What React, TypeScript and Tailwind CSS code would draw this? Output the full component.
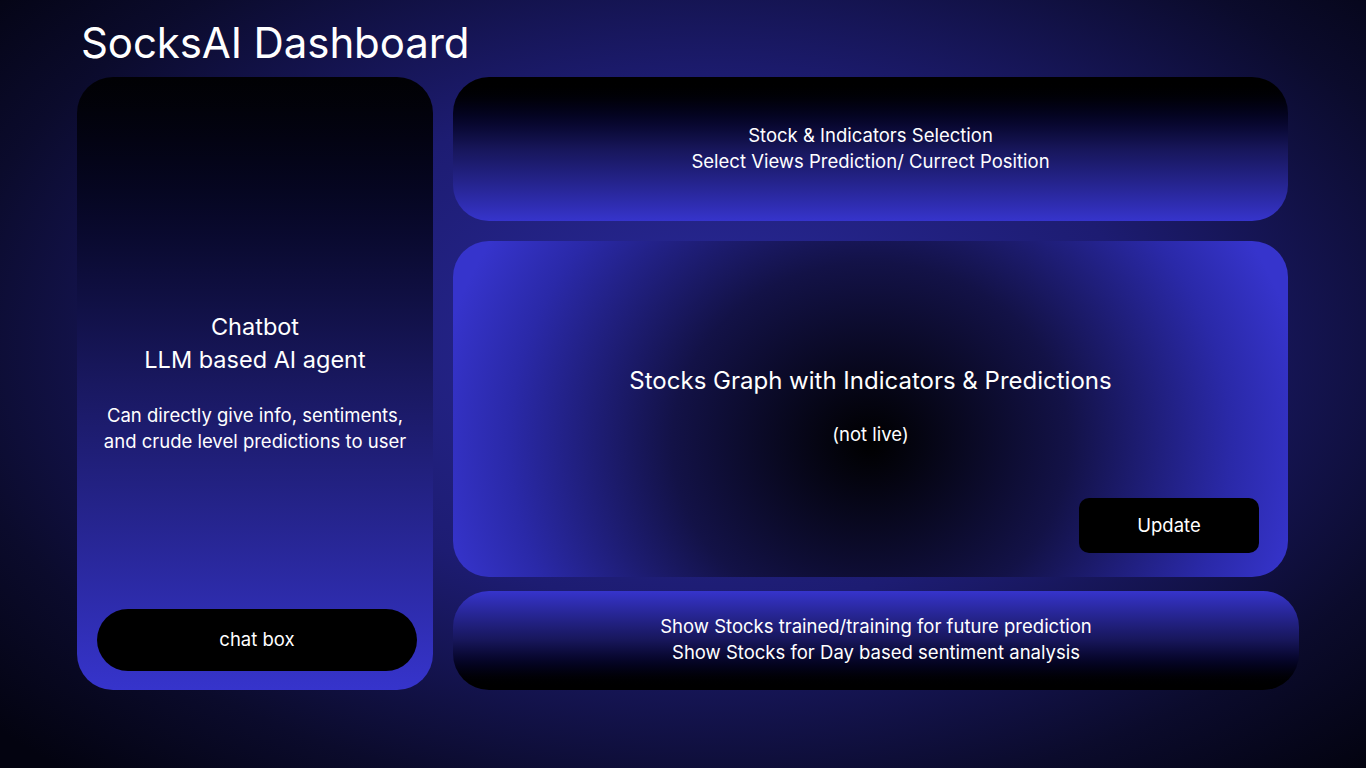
import React from 'react';

const font = { fontFamily: 'Inter, "Noto Sans", sans-serif' };

export default function App() {
    return (
        <div
            style={font}
            className="h-[768px] w-full overflow-hidden text-white bg-[radial-gradient(ellipse_70%_75%_at_52%_45%,#2a2a9c_0%,#1d1c72_45%,#0b0b2c_80%,#030310_100%)]"
        >
            <div className="pl-[77px] pr-[66px] pt-[18px]">
                {/* Title */}
                <h1 className="ml-[4px] h-[59px] text-[42px] leading-[50px] font-normal tracking-[-0.1px]">SocksAI Dashboard</h1>

                <div className="flex gap-5">
                    {/* Chatbot column */}
                    <div className="w-[356px] h-[613px] rounded-[36px] bg-gradient-to-b from-[#010104] via-[#191860] to-[#3634cc] flex flex-col pb-[19px]">
                        <div className="flex-1 flex flex-col items-center justify-center text-center pt-[78px]">
                            <div className="text-[23.5px] leading-[33px]">Chatbot</div>
                            <div className="text-[23.5px] leading-[33px]">LLM based AI agent</div>
                            <div className="mt-[26px] text-[18.5px] leading-[26px]">
                                Can directly give info, sentiments,
                                <br />
                                and crude level predictions to user
                            </div>
                        </div>
                        <button className="ml-5 w-[320px] h-[62px] rounded-full bg-black text-[18.5px]">chat box</button>
                    </div>

                    {/* Right column */}
                    <div className="flex flex-col">
                        <div className="w-[835px] h-[144px] rounded-[36px] bg-gradient-to-b from-[#000000] via-[#17165a] to-[#3634cc] flex flex-col items-center justify-center text-[18.5px] leading-[26px] pb-[2px]">
                            <div>Stock &amp; Indicators Selection</div>
                            <div>Select Views Prediction/ Currect Position</div>
                        </div>

                        <div className="mt-5 w-[835px] h-[336px] rounded-[36px] bg-[radial-gradient(ellipse_440px_400px_at_50%_60%,#000000_0%,#131247_45%,#2a29a8_82%,#3634cc_100%)] flex flex-col">
                            <div className="flex-1 flex flex-col items-center pt-[124px]">
                                <div className="text-[24px] leading-[32px]">Stocks Graph with Indicators &amp; Predictions</div>
                                <div className="mt-[24px] text-[18.5px] leading-[26px]">(not live)</div>
                            </div>
                            <div className="flex justify-end pr-[29px] pb-[24px]">
                                <button className="w-[180px] h-[55px] rounded-[10px] bg-black text-[18.5px]">Update</button>
                            </div>
                        </div>

                        <div className="mt-[14px] w-[846px] h-[99px] rounded-[36px] bg-gradient-to-b from-[#3634cc] via-[#17165a] to-[#000000] flex flex-col items-center justify-center text-[18.5px] leading-[26px] pb-[4px]">
                            <div>Show Stocks trained/training for future prediction</div>
                            <div>Show Stocks for Day based sentiment analysis</div>
                        </div>
                    </div>
                </div>
            </div>
        </div>
    );
}
